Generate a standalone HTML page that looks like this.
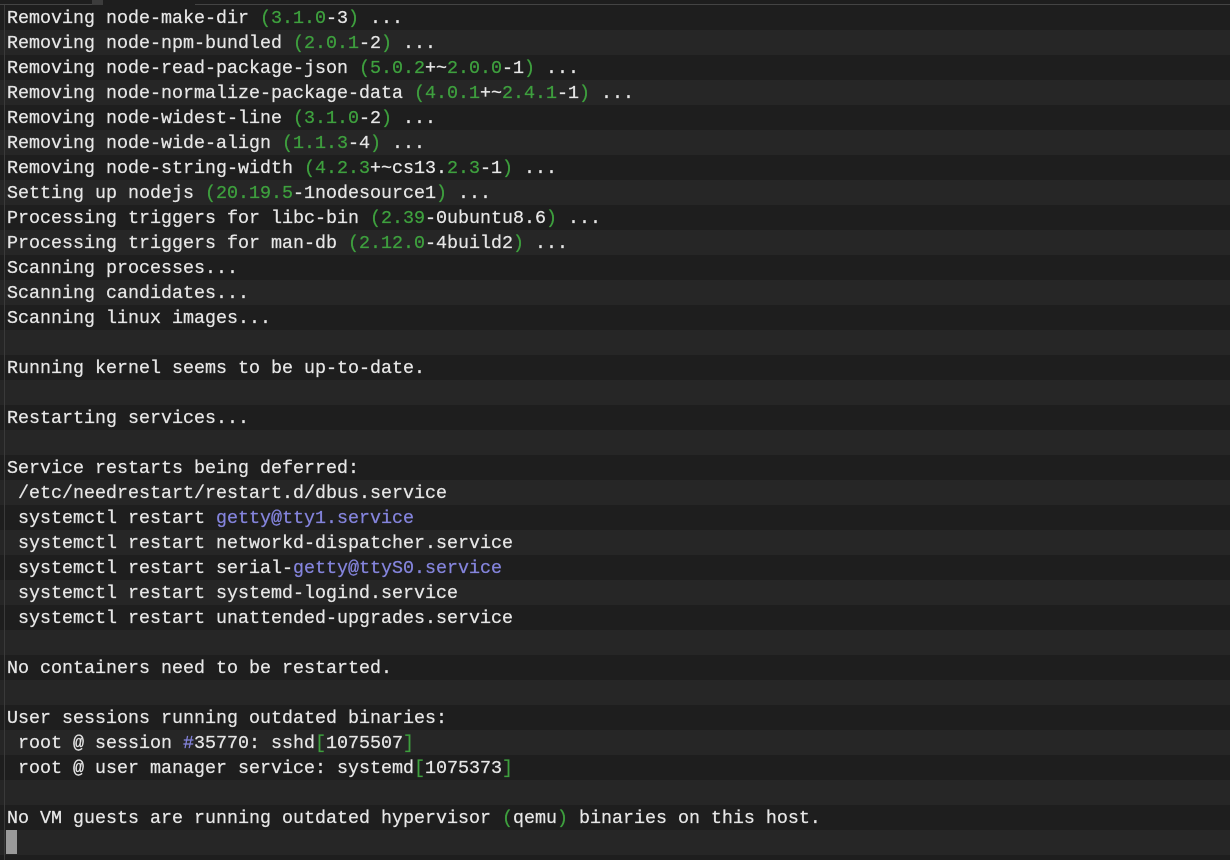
<!DOCTYPE html>
<html><head><meta charset="utf-8"><style>
html,body{margin:0;padding:0;background:#1e1e1e;width:1230px;height:860px;overflow:hidden}
.top{position:absolute;left:0;top:0;width:1230px;height:5px;background:#1e1e1e;border-bottom:1px solid #444;box-sizing:border-box}
.t1{position:absolute;left:92px;top:0;width:11px;height:5px;background:#3c3c3c}
.t2{position:absolute;left:103px;top:0;width:92px;height:6px;background:#1e1e1e}
.lb{position:absolute;left:4px;top:5px;width:1px;height:855px;background:#3a3a3a;z-index:2}
.term{position:absolute;left:0;top:5px;width:1230px;font-family:"Liberation Mono","DejaVu Sans Mono",monospace;font-size:18.33px;color:#e6e6e6;-webkit-text-stroke:0.25px #e6e6e6}
.r{height:25px;line-height:27px;padding-left:7px;white-space:pre;background:#1e1e1e;box-sizing:border-box}
.r:nth-child(even){background:#262626}
.g{color:#3ea03e;-webkit-text-stroke-color:#3ea03e}.p{color:#8484dc;-webkit-text-stroke-color:#8484dc}
.cur{display:inline-block;width:11px;height:24px;background:#9a9a9a;vertical-align:top;margin-left:-1px}
</style></head><body>
<div class="top"></div><div class="t1"></div><div class="t2"></div>
<div class="term">
<div class="r">Removing node-make-dir <span class="g">(3.1.0</span>-3<span class="g">)</span> ...</div>
<div class="r">Removing node-npm-bundled <span class="g">(2.0.1</span>-2<span class="g">)</span> ...</div>
<div class="r">Removing node-read-package-json <span class="g">(5.0.2</span>+~<span class="g">2.0.0</span>-1<span class="g">)</span> ...</div>
<div class="r">Removing node-normalize-package-data <span class="g">(4.0.1</span>+~<span class="g">2.4.1</span>-1<span class="g">)</span> ...</div>
<div class="r">Removing node-widest-line <span class="g">(3.1.0</span>-2<span class="g">)</span> ...</div>
<div class="r">Removing node-wide-align <span class="g">(1.1.3</span>-4<span class="g">)</span> ...</div>
<div class="r">Removing node-string-width <span class="g">(4.2.3</span>+~cs13.<span class="g">2.3</span>-1<span class="g">)</span> ...</div>
<div class="r">Setting up nodejs <span class="g">(20.19.5</span>-1nodesource1<span class="g">)</span> ...</div>
<div class="r">Processing triggers for libc-bin <span class="g">(2.39</span>-0ubuntu8.6<span class="g">)</span> ...</div>
<div class="r">Processing triggers for man-db <span class="g">(2.12.0</span>-4build2<span class="g">)</span> ...</div>
<div class="r">Scanning processes...</div>
<div class="r">Scanning candidates...</div>
<div class="r">Scanning linux images...</div>
<div class="r"> </div>
<div class="r">Running kernel seems to be up-to-date.</div>
<div class="r"> </div>
<div class="r">Restarting services...</div>
<div class="r"> </div>
<div class="r">Service restarts being deferred:</div>
<div class="r"> /etc/needrestart/restart.d/dbus.service</div>
<div class="r"> systemctl restart <span class="p">getty@tty1.service</span></div>
<div class="r"> systemctl restart networkd-dispatcher.service</div>
<div class="r"> systemctl restart serial-<span class="p">getty@ttyS0.service</span></div>
<div class="r"> systemctl restart systemd-logind.service</div>
<div class="r"> systemctl restart unattended-upgrades.service</div>
<div class="r"> </div>
<div class="r">No containers need to be restarted.</div>
<div class="r"> </div>
<div class="r">User sessions running outdated binaries:</div>
<div class="r"> root @ session <span class="p">#</span>35770: sshd<span class="g">[</span>1075507<span class="g">]</span></div>
<div class="r"> root @ user manager service: systemd<span class="g">[</span>1075373<span class="g">]</span></div>
<div class="r"> </div>
<div class="r">No VM guests are running outdated hypervisor <span class="g">(</span>qemu<span class="g">)</span> binaries on this host.</div>
<div class="r" style="line-height:25px"><span class="cur"></span></div>
</div>
<div class="lb"></div>
</body></html>
